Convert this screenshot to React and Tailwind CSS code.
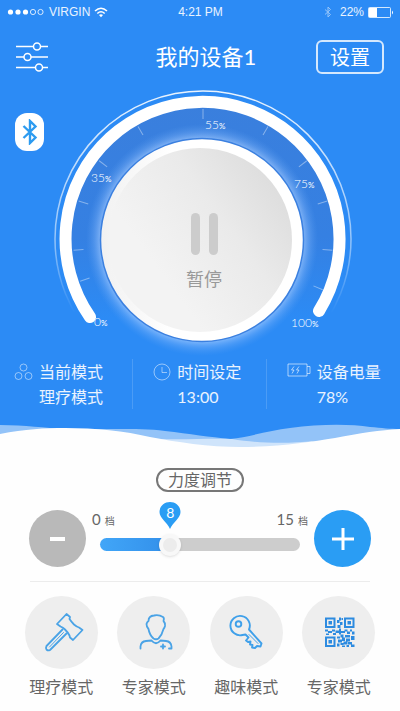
import { useState } from "react";

const MAX_LEVEL = 24;

const ticks = [-109, -95, -73, -53, -30, 0, 30, 53, 73, 95, 113];

const dialLabels = [
  { value: "0", x: 44, y: 236 },
  { value: "35", x: 41, y: 92 },
  { value: "55", x: 155, y: 39 },
  { value: "75", x: 244, y: 98 },
  { value: "100", x: 241, y: 237 },
];

function HammerIcon() {
  return (
    <svg viewBox="0 0 48 48" className="size-12" fill="none" stroke="#4aa3e6" strokeWidth="1.8" strokeLinejoin="round" strokeLinecap="round">
      <path d="M29.5 5 L33 8 L32.5 10 Q34.5 13 37 15.5 Q40 18 42 18.5 L45.5 21 L36 31 L33 28.5 L32.5 26.5 Q31 23.5 28 20.5 Q26 18.5 23.5 17.5 L20 15 Z" />
      <path d="M25.5 20.5 L9.5 37 Q8.5 39 9.5 40.5 Q11 42 13 41 L29.5 24.5" />
      <path d="M26.5 23.5 L12.5 38" strokeWidth="1" />
    </svg>
  );
}

function ExpertIcon() {
  return (
    <svg viewBox="0 0 48 48" className="size-12" fill="none" stroke="#4aa3e6" strokeWidth="1.8" strokeLinejoin="round" strokeLinecap="round">
      <path d="M18.5 12 Q18.5 7 24 6.5 Q29 5.5 33 8 Q34.5 9 33.5 12 Q35.5 14 35 17 Q34.5 19 33.5 20 Q32 26 28.5 29.5 Q26 31 23.5 29.5 Q19.5 26 18.5 20 Q16.5 18 16.5 15 Q17 13 18.5 12 Z" />
      <path d="M10.5 39.5 V37.5 Q11 32.5 16 32 L21.5 31.5 Q26 37 30.5 31.5 L36 32 Q41 32.5 41.5 37.5 V39.5 H39" />
      <path d="M33 35.5 V39.5 M31 37.5 H35" />
    </svg>
  );
}

function KeyIcon() {
  return (
    <svg viewBox="0 0 48 48" className="size-12" fill="none" stroke="#3fa0ea" strokeWidth="1.9" strokeLinejoin="round" strokeLinecap="round">
      <path d="M27 20.5 A9.7 9.7 0 1 0 20.5 26 L23.5 25.5 L26.5 28.5 L24 31.5 L26 33 L28.5 32.5 L28 35.5 L30.5 36 L30 38.5 L33 39 L35 37 L38.5 37.5 L39.5 34.5 Z" />
      <circle cx="16.5" cy="15" r="2.8" />
      <path d="M27 25.5 L36 34.5" strokeWidth="1" />
    </svg>
  );
}

function QrIcon() {
  return (
    <svg viewBox="0 0 48 48" className="size-12" fill="none" stroke="#2d8be0" strokeWidth="2">
      <rect x="11" y="9.5" width="8.5" height="8.5" />
      <rect x="30" y="9.5" width="8.5" height="8.5" />
      <rect x="11" y="28.5" width="8.5" height="8.5" />
      <g fill="#2d8be0" stroke="none">
        <path d="M13.5 12h3.5v3.5h-3.5z M32.5 12h3.5v3.5h-3.5z M13.5 31h3.5v3.5h-3.5z" />
        <path d="M24 8.5h2v3h-2z M22 11h2.5v3H22z M25 13h2.5v3H25z M22.5 16h3v3h-3z M26.5 9h1.5v2h-1.5z" />
        <path d="M10 20.5h3v2h-3z M13 22h4v2h-4z M17 20.5h3v2h-3z M11 24.5h3v1.5h-3z M18 24h3v2h-3z M20.5 21.5h4v2.5h-4z M24 19.5h2v6h-2z M26 22h4v2h-4z M29.5 20.5h3v2h-3z M32 22.5h3v2.5h-3z M35 20.5h2v2h-2z M37 22.5h2.5v3H37z" />
        <path d="M22 27.5h3v2h-3z M25.5 25.5h3v3h-3z M30 26h5v2.5h-5z M36 27h3.5v4H36z M23 30.5h4v3h-4z M27 28.5h3v3.5h-3z M31 29.5h4v3h-4z M22 34.5h2.5v3H22z M25.5 34h3v2h-3z M28.5 32.5h4v3h-4z M33 33h4v2.5h-4z M27 36.5h3v1.5h-3z M31.5 36h2.5v2h-2.5z M36 35.5h3.5v2.5H36z" />
      </g>
    </svg>
  );
}

const modes = [
  { id: 1, name: "理疗模式", Icon: HammerIcon },
  { id: 2, name: "专家模式", Icon: ExpertIcon },
  { id: 3, name: "趣味模式", Icon: KeyIcon },
  { id: 4, name: "专家模式", Icon: QrIcon },
];

function StatusBar() {
  return (
    <div className="grid grid-cols-3 items-center h-6 pl-[7px] pr-[6px] font-['Liberation_Sans',sans-serif] text-xs text-white/90">
      <div className="flex items-center gap-1">
        <svg viewBox="0 0 38 8" className="w-[38px] h-2" fill="white" stroke="white">
          <circle cx="3.5" cy="4" r="2.6" stroke="none" />
          <circle cx="11" cy="4" r="2.6" stroke="none" />
          <circle cx="18.5" cy="4" r="2.6" stroke="none" />
          <circle cx="26" cy="4" r="2.6" fill="none" strokeWidth="0.8" />
          <circle cx="33.5" cy="4" r="2.6" fill="none" strokeWidth="0.8" />
        </svg>
        VIRGIN
        <svg viewBox="0 0 14 11" className="w-[14px] h-[11px]" fill="none" stroke="white" strokeWidth="1.6">
          <path d="M1 4 Q7 -1.5 13 4" />
          <path d="M3.3 6.5 Q7 3 10.7 6.5" />
          <path d="M5 8 Q7 6.3 9 8 L7 10.3 Z" fill="white" stroke="none" />
        </svg>
      </div>
      <div className="text-center">4:21 PM</div>
      <div className="flex items-center justify-end gap-1">
        <svg viewBox="0 0 8 12" className="w-2 h-3 mr-1 opacity-50" fill="none" stroke="white">
          <path d="M1 3.5 L6.5 8.5 L4 11 V1 L6.5 3.5 L1 8.5" />
        </svg>
        22%
        <svg viewBox="0 0 26 11" className="w-[26px] h-[11px]">
          <rect x="0.5" y="0.5" width="22" height="10" rx="1" fill="none" stroke="white" strokeOpacity="0.8" />
          <rect x="1" y="1" width="8" height="9" fill="white" />
          <path d="M24 3.5 Q26 5.5 24 7.5 Z" fill="white" />
        </svg>
      </div>
    </div>
  );
}

function Dial({ paused, onToggle }) {
  return (
    <div className="grid place-items-center">
      <svg viewBox="0 0 300 264" className="col-start-1 row-start-1 w-[300px] h-[264px] overflow-visible">
        <defs>
          <linearGradient id="well" x1="0" y1="0" x2="0" y2="1">
            <stop offset="0" stopColor="#3a7fdd" />
            <stop offset="0.55" stopColor="#3580e2" />
            <stop offset="0.88" stopColor="#2c8bf5" />
          </linearGradient>
          <linearGradient id="rim" x1="0" y1="0" x2="0" y2="1">
            <stop offset="0" stopColor="white" stopOpacity="0.9" />
            <stop offset="0.5" stopColor="white" stopOpacity="0.5" />
            <stop offset="0.75" stopColor="white" stopOpacity="0" />
          </linearGradient>
          <radialGradient id="glow">
            <stop offset="0.87" stopColor="#a4cbff" stopOpacity="0.7" />
            <stop offset="0.93" stopColor="#80b5fa" stopOpacity="0.35" />
            <stop offset="1" stopColor="#5a9ef0" stopOpacity="0" />
          </radialGradient>
          <linearGradient id="face" x1="1" y1="0.15" x2="0.1" y2="0.8">
            <stop offset="0" stopColor="#dadada" />
            <stop offset="0.4" stopColor="#eaeaea" />
            <stop offset="0.8" stopColor="#f3f3f3" />
          </linearGradient>
          <linearGradient id="edge" x1="0" y1="0" x2="1" y2="0">
            <stop offset="0" stopColor="#f1f1f1" />
            <stop offset="0.35" stopColor="#ffffff" />
          </linearGradient>
        </defs>
        <path d="M40 227 A137 137 0 1 1 269 221 L235 258 H75 Z" fill="url(#well)" />
        <circle cx="153" cy="149" r="148" fill="none" stroke="url(#rim)" strokeWidth="1.5" />
        {ticks.map((angle) => (
          <path key={angle} d="M153 19 V29" stroke="white" strokeOpacity="0.4" transform={`rotate(${angle} 153 149)`} />
        ))}
        <circle cx="152" cy="150" r="116" fill="url(#glow)" />
        <path d="M40 227 A137 137 0 1 1 269 221" fill="none" stroke="white" strokeWidth="12" strokeLinecap="round" />
        <circle cx="152" cy="150" r="101.5" fill="url(#edge)" stroke="#3b80e0" strokeWidth="1.5" />
        <circle cx="150" cy="150" r="92" fill="url(#face)" />
        {dialLabels.map((label) => (
          <text key={label.value} x={label.x} y={label.y} fill="white" fontSize="12" fontWeight="300">
            {label.value}
            <tspan fontSize="8" fontWeight="400">%</tspan>
          </text>
        ))}
      </svg>
      <button
        type="button"
        aria-pressed={paused}
        onClick={onToggle}
        className="col-start-1 row-start-1 z-10 flex flex-col items-center justify-center gap-3 size-[184px] rounded-full pt-10 ml-2 mt-5 text-lg leading-6 text-[#999999] cursor-pointer"
      >
        <span className="flex gap-[9px]">
          <span className="w-[9px] h-[42px] rounded-full bg-[#cccccc]" />
          <span className="w-[9px] h-[42px] rounded-full bg-[#cccccc]" />
        </span>
        暂停
      </button>
    </div>
  );
}

function Stats() {
  return (
    <div className="grid grid-cols-3 h-[50px] mt-[5px] divide-x divide-white/15 text-base leading-[25px] text-white/90">
      <div className="flex gap-[6px] pl-[14px]">
        <svg viewBox="0 0 19 18" className="w-[19px] h-[18px] mt-1" fill="none" stroke="white" strokeOpacity="0.5">
          <circle cx="9.5" cy="4.5" r="3.5" />
          <circle cx="4.5" cy="13" r="3.5" />
          <circle cx="14.5" cy="13" r="3.5" />
        </svg>
        <div>
          <p>当前模式</p>
          <p>理疗模式</p>
        </div>
      </div>
      <div className="flex gap-[6px] pl-5">
        <svg viewBox="0 0 18 18" className="size-[18px] mt-1" fill="none" stroke="white" strokeOpacity="0.5">
          <circle cx="9" cy="9" r="8" />
          <path d="M9 4 V9.5 H14" />
        </svg>
        <div>
          <p>时间设定</p>
          <p>13:00</p>
        </div>
      </div>
      <div className="flex gap-[6px] pl-5">
        <svg viewBox="0 0 24 14" className="w-6 h-[14px] mt-1" fill="none" stroke="white" strokeOpacity="0.6">
          <path d="M1 1 H20 V3.5 H23 V10.5 H20 V13 H1 Z M20 3.5 V10.5" />
          <path d="M7 3.5 L4.5 7 H7 L5 10.5 M12 3.5 L9.5 7 H12 L10 10.5" />
        </svg>
        <div>
          <p>设备电量</p>
          <p>78%</p>
        </div>
      </div>
    </div>
  );
}

function Wave() {
  return (
    <svg viewBox="0 0 400 30" preserveAspectRatio="none" className="block w-full h-[30px] mt-[9px]">
      <path d="M0 7 C25 7 45 10 65 11 H115 C135 11 150 11 165 13 C190 16 210 19 230 21 C250 19 270 12 290 10 C320 6 350 6 370 9 C382 10 390 11 400 11 V30 H0 Z" fill="#93c3f8" />
      <path d="M160 21 C185 22 210 20 232 21 C255 25 285 26 315 23 L290 30 H180 Z" fill="#cfe4fb" />
      <path d="M0 16 C25 11 45 10 65 10 C95 10 125 13 150 19 C175 24 210 29 240 29 C280 29 310 24 335 20 C360 15 380 12 400 11 V30 H0 Z" fill="#fefefe" />
    </svg>
  );
}

function LevelControl() {
  const [level, setLevel] = useState(8);
  const ratio = level / MAX_LEVEL;
  // the thumb is 22px wide, so its centre travels between 11px and 100% - 11px
  const position = `calc(11px + (100% - 22px) * ${ratio})`;

  return (
    <section className="px-[29px] text-[#666666]">
      <h2 className="w-fit mx-auto px-[10px] border-2 border-[#777777] rounded-full text-base leading-5">力度调节</h2>
      <div className="flex items-center gap-[14px] mt-[17px]">
        <button
          type="button"
          aria-label="减"
          onClick={() => setLevel(Math.max(0, level - 1))}
          className="flex items-center justify-center size-[57px] shrink-0 rounded-full bg-[#b9b9b9] cursor-pointer"
        >
          <span className="w-[15px] h-1 bg-white" />
        </button>
        <div className="relative flex-1 pb-[17px]">
          <div className="flex justify-between -mx-2 text-[15px] leading-5">
            <label htmlFor="level">
              0<span className="ml-1 text-[10px]">档</span>
            </label>
            <span>
              15<span className="ml-1 text-[10px]">档</span>
            </span>
          </div>
          <output htmlFor="level" className="absolute -top-[7px] -translate-x-1/2 grid justify-items-center" style={{ left: position }}>
            <svg viewBox="0 0 22 27" className="col-start-1 row-start-1 w-[22px] h-[27px]" fill="#2a9df4">
              <path d="M11 0 C17 0 21.5 4.5 21.5 10 C21.5 16 14 20 11 27 C8 20 0.5 16 0.5 10 C0.5 4.5 5 0 11 0 Z" />
            </svg>
            <span className="col-start-1 row-start-1 text-sm leading-[22px] text-white">{level}</span>
          </output>
          <input
            id="level"
            type="range"
            min="0"
            max={MAX_LEVEL}
            value={level}
            onChange={(e) => setLevel(Number(e.target.value))}
            style={{ backgroundImage: `linear-gradient(to right, #41a6f8, #3390ea ${ratio * 100}%, #cdcdcd ${ratio * 100}%)` }}
            className="block w-full h-[13px] mt-[7px] appearance-none rounded-full cursor-pointer [&::-webkit-slider-thumb]:appearance-none [&::-webkit-slider-thumb]:size-[22px] [&::-webkit-slider-thumb]:rounded-full [&::-webkit-slider-thumb]:bg-[#ececec] [&::-webkit-slider-thumb]:border-4 [&::-webkit-slider-thumb]:border-[#f8f8f8] [&::-webkit-slider-thumb]:shadow"
          />
        </div>
        <button
          type="button"
          aria-label="加"
          onClick={() => setLevel(Math.min(MAX_LEVEL, level + 1))}
          className="flex items-center justify-center size-[57px] shrink-0 rounded-full bg-[#2a9df4] cursor-pointer"
        >
          <svg viewBox="0 0 22 22" className="size-[22px]" stroke="white" strokeWidth="3">
            <path d="M11 0 V22 M0 11 H22" />
          </svg>
        </button>
      </div>
    </section>
  );
}

export default function App() {
  const [paused, setPaused] = useState(false);

  return (
    <div className="min-h-screen bg-[#fefefe] font-['Lato','Noto_Sans_CJK_SC',sans-serif]">
      <div className="bg-[#2c8bf5]">
        <StatusBar />
        <header className="grid grid-cols-3 items-center pt-4 px-4 text-white">
          <button type="button" aria-label="菜单" className="w-fit cursor-pointer">
            <svg viewBox="0 0 32 30" className="w-8 h-[30px]" fill="#2c8bf5" stroke="white" strokeWidth="1.5">
              <path d="M0 4.5 H32 M0 15 H32 M0 25.5 H32" />
              <circle cx="21" cy="4.5" r="3.5" />
              <circle cx="11.5" cy="15" r="3.5" />
              <circle cx="23" cy="25.5" r="3.5" />
            </svg>
          </button>
          <h1 className="text-center text-[22px] leading-8 whitespace-nowrap ml-3">我的设备1</h1>
          <button type="button" className="justify-self-end w-[68px] border-2 border-white/80 rounded-md text-xl leading-[30px] cursor-pointer">设置</button>
        </header>
        <main className="relative pt-4">
          <span className="absolute left-[15px] top-[39px] flex items-center justify-center w-[29px] h-[38px] rounded-xl bg-white">
            <svg viewBox="0 0 16 26" className="w-4 h-[26px]" fill="none" stroke="#2c9bf0" strokeWidth="2.4">
              <path d="M1.5 7 L13.5 18.5 L8 24 V2 L13.5 7.5 L1.5 19" />
            </svg>
          </span>
          <Dial paused={paused} onToggle={() => setPaused(!paused)} />
        </main>
        <Stats />
        <Wave />
      </div>
      <div className="pt-5">
        <LevelControl />
        <hr className="mx-[30px] mt-[13px] border-[#ececec]" />
        <nav className="grid grid-cols-4 px-[15px] pt-[14px] pb-3">
          {modes.map(({ id, name, Icon }) => (
            <button key={id} type="button" className="flex flex-col items-center gap-[6px] text-base leading-6 text-[#666666] cursor-pointer">
              <span className="flex items-center justify-center size-[73px] rounded-full bg-[#eeeeee]">
                <Icon />
              </span>
              {name}
            </button>
          ))}
        </nav>
      </div>
    </div>
  );
}
